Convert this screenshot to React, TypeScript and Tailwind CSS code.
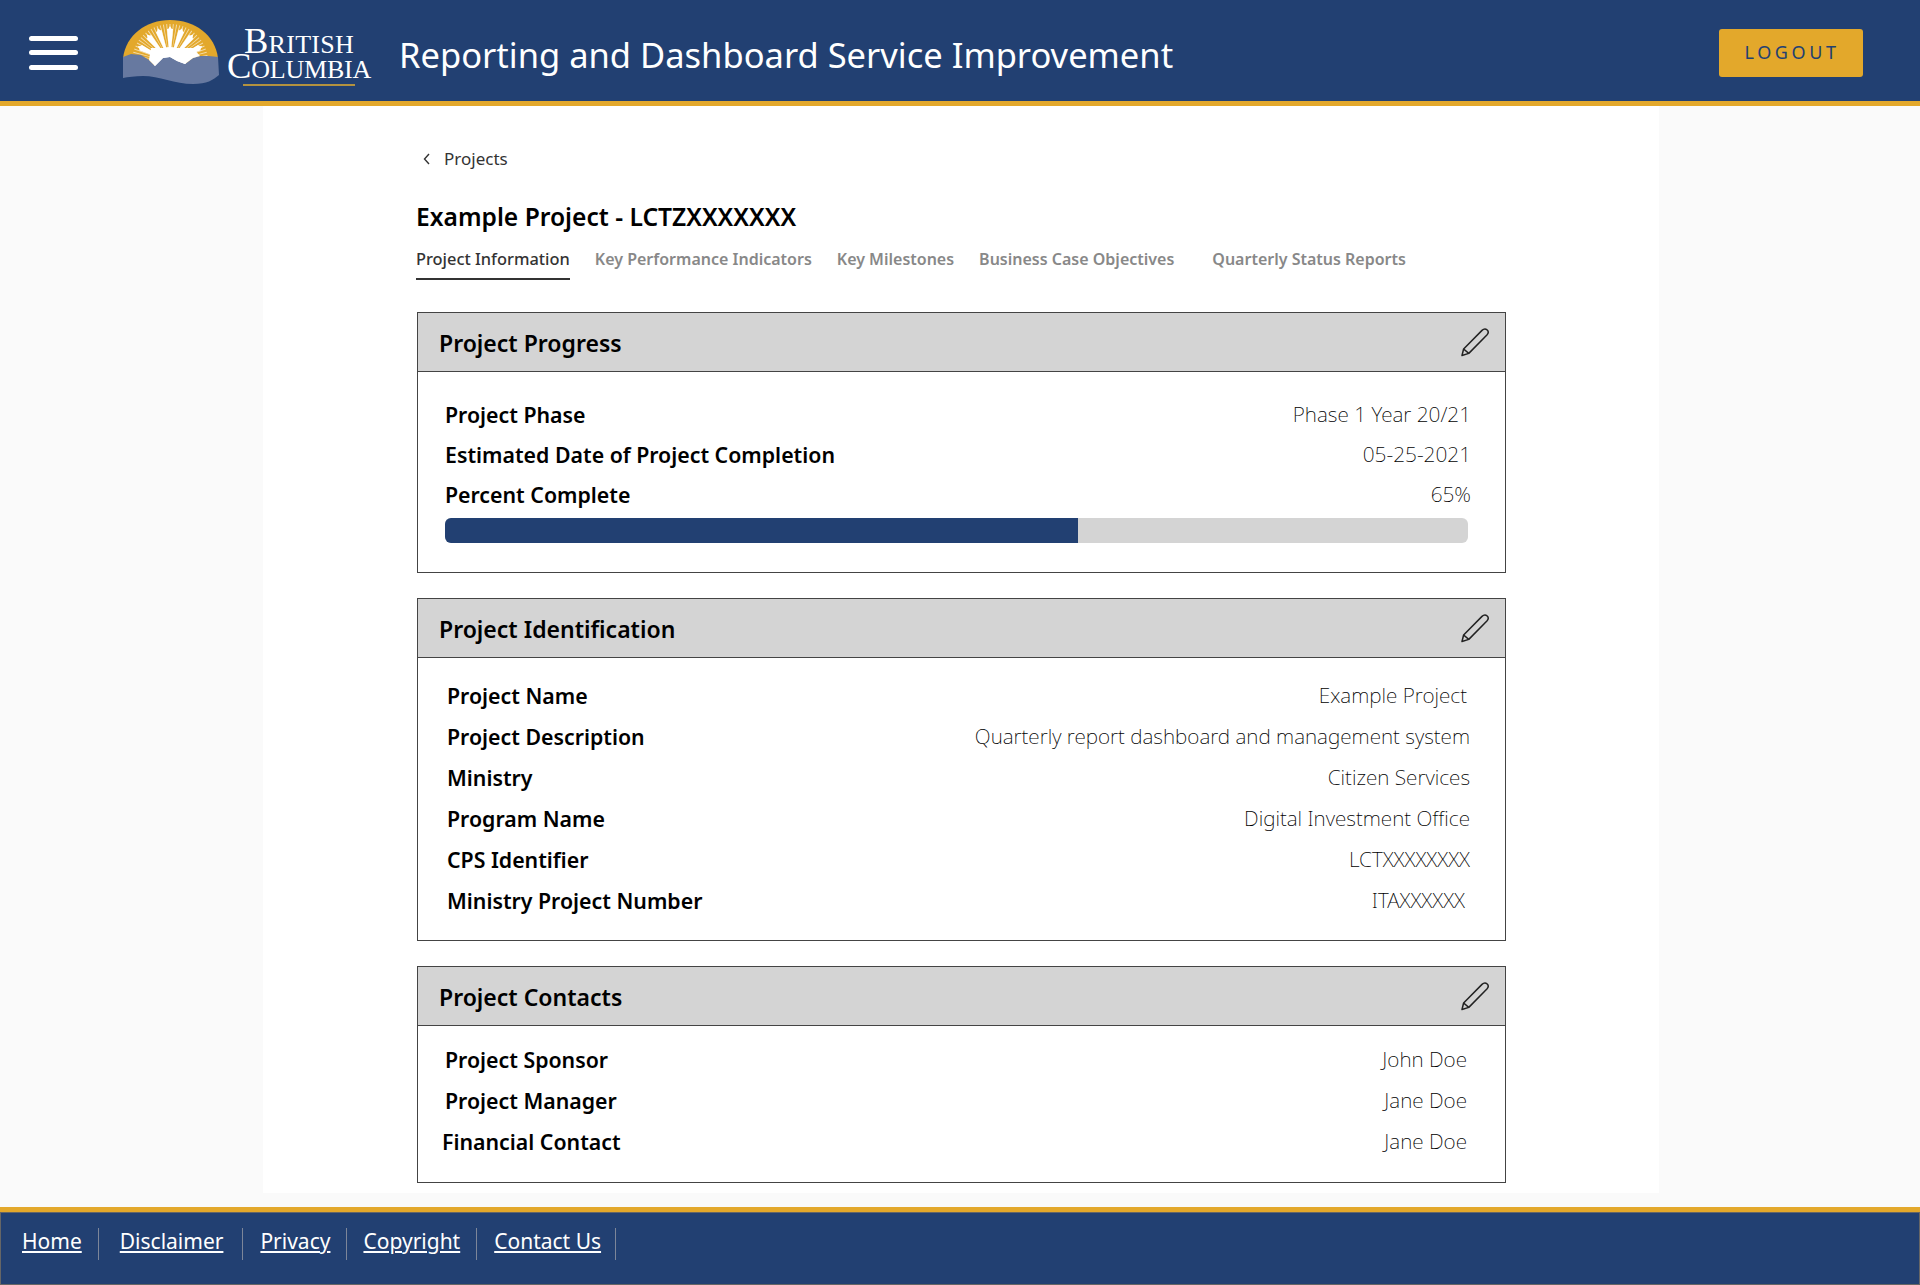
import React from 'react';

const fineRays = Array.from({ length: 33 }, (_, i) => -80 + i * 5);
const wideRays = [-64, -40, -20, 0, 20, 40, 64];

const BcLogo = () => (
  <svg width="96" height="66" viewBox="0 0 96 66" className="shrink-0">
    <path d="M0 38 C3 15 23 0 47 0 C72 0 92 15 95 38 L95 46 L0 46 Z" fill="#e3a82b" />
    {fineRays.map((a) => (
      <path key={a} d="M47 42 L46.5 4 L47.5 4 Z" fill="#fff" opacity="0.6" transform={`rotate(${a} 47 42)`} />
    ))}
    {wideRays.map((a) => (
      <path key={a} d="M47 42 L44 9 L45.2 9 L47 6 L48.8 9 L50 9 Z" fill="#fff" transform={`rotate(${a} 47 42)`} />
    ))}
    <circle cx="47" cy="43" r="16" fill="#fff" />
    <path d="M0 37 L8 34 L18 35 L26 40 L32 46 L40 38 L47 37 L54 41 L62 44 L70 38 L77 36 L86 36 L95 37 L96 55 C90 60 84 64 70 64 C52 64 36 56 20 56 C12 56 5 57 0 58 Z" fill="#6779a0" />
    <path d="M26 40 L32 46 L40 38 L47 37 L54 41 L62 44 L70 38 L77 36 L70 28 L28 28 Z" fill="#fff" />
  </svg>
);

const Hamburger = () => (
  <div className="flex flex-col gap-[9.5px] w-[49px]">
    <div className="h-[5px] bg-white rounded-full" />
    <div className="h-[5px] bg-white rounded-full" />
    <div className="h-[5px] bg-white rounded-full" />
  </div>
);

const PencilIcon = () => (
  <svg width="30" height="30" viewBox="0 0 30 30" fill="none" stroke="#222" strokeWidth="1.5" strokeLinejoin="round">
    <path d="M2 28.5 L3.6 22 L22 3.4 C23.5 1.9 25.8 1.7 27.2 3 C28.6 4.4 28.4 6.4 26.9 8 L8.8 26.4 Z" />
    <path d="M3.6 22 L8.8 26.4" />
  </svg>
);

interface CardProps {
  title: string;
  bodyClass: string;
  children: React.ReactNode;
}

const Card = ({ title, bodyClass, children }: CardProps) => (
  <section className="border border-[#444] bg-white w-[1089px]">
    <div className="h-[59px] bg-[#d4d4d4] border-b border-[#444] flex items-center justify-between pl-[21px] pr-[15px]">
      <h2 className="text-[23px] font-semibold text-black pt-[2px]">{title}</h2>
      <PencilIcon />
    </div>
    <div className={bodyClass}>{children}</div>
  </section>
);

interface RowProps {
  label: string;
  value: string;
  rowClass: string;
}

const Row = ({ label, value, rowClass }: RowProps) => (
  <div className={`flex items-center justify-between ${rowClass}`}>
    <span className="text-[21.3px] font-semibold text-black">{label}</span>
    <span className="text-[20.8px] font-extralight text-black">{value}</span>
  </div>
);

const tabs = ['Key Performance Indicators', 'Key Milestones', 'Business Case Objectives'];
const footerLinks = [
  { label: 'Home', cls: 'pl-[21px] pr-[16px]' },
  { label: 'Disclaimer', cls: 'pl-[21px] pr-[19px]' },
  { label: 'Privacy', cls: 'pl-[17px] pr-[16px]' },
  { label: 'Copyright', cls: 'pl-[16px] pr-[16px]' },
  { label: 'Contact Us', cls: 'pl-[17px] pr-[14px]' },
];

const App: React.FC = () => {
  return (
    <div className="h-[1285px] flex flex-col bg-[#fafafa] font-['Noto_Sans',sans-serif] overflow-hidden">
      <header className="h-[106px] shrink-0 bg-[#224072] border-b-[5px] border-[#e3a82b] flex items-center pt-[4px] pl-[29px] pr-[57px]">
        <Hamburger />
        <div className="ml-[45px] flex items-center">
          <BcLogo />
          <div className="ml-[8px] font-['Liberation_Serif',serif] text-white [font-variant:small-caps] leading-[24.5px] text-center mt-[10px]">
            <div className="text-[36.5px] tracking-[0.3px]">British</div>
            <div className="text-[36.5px] tracking-[-0.2px]">Columbia</div>
            <div className="h-[2px] bg-[#b3923f] mx-[16px] mt-[6px]" />
          </div>
        </div>
        <h1 className="ml-[28px] mt-[4px] text-[34.5px] text-white font-normal">Reporting and Dashboard Service Improvement</h1>
        <button className="ml-auto w-[144px] h-[48px] pl-[2px] bg-[#e3a82b] rounded-[3px] text-[#224072] text-[18px] tracking-[0.2em]">
          LOGOUT
        </button>
      </header>

      <main className="ml-[263px] w-[1396px] h-[1087px] shrink-0 bg-white pl-[153px]">
        <a className="flex items-center gap-[10px] mt-[41px] pl-[4px] h-[24px] text-[17px] text-[#333]">
          <svg width="14" height="14" viewBox="0 0 14 14" fill="none" stroke="#333" strokeWidth="1.4">
            <path d="M9 2 L4.5 7 L9 12" />
          </svg>
          Projects
        </a>
        <div className="mt-[29px] text-[24.6px] font-semibold text-black leading-[33px]">Example Project - LCTZXXXXXXX</div>
        <nav className="flex items-start mt-[7px] h-[58px] text-[16px] font-semibold text-[#888]">
          <div className="h-[40px] pt-[7px] border-b-2 border-[#333] text-[#333] text-[16.4px] font-medium">Project Information</div>
          {tabs.map((t) => (
            <div key={t} className="ml-[25px] pt-[7px]">{t}</div>
          ))}
          <div className="ml-[38px] pt-[7px]">Quarterly Status Reports</div>
        </nav>

        <div className="mt-[14px] ml-[1px] flex flex-col gap-[25px]">
          <Card title="Project Progress" bodyClass="h-[200px] pl-[27px] pr-[34px] pt-[23px]">
            <Row label="Project Phase" value="Phase 1 Year 20/21" rowClass="h-[40px]" />
            <Row label="Estimated Date of Project Completion" value="05-25-2021" rowClass="h-[40px]" />
            <Row label="Percent Complete" value="65%" rowClass="h-[40px]" />
            <div className="h-[25px] mt-[3px] mr-[3px] bg-[#d4d4d4] rounded-[6px] overflow-hidden">
              <div className="h-full w-[633px] bg-[#224072]" />
            </div>
          </Card>
          <Card title="Project Identification" bodyClass="h-[282px] pl-[29px] pr-[35px] pt-[17px]">
            <Row label="Project Name" value="Example Project" rowClass="h-[41px] pr-[3px]" />
            <Row label="Project Description" value="Quarterly report dashboard and management system" rowClass="h-[41px]" />
            <Row label="Ministry" value="Citizen Services" rowClass="h-[41px]" />
            <Row label="Program Name" value="Digital Investment Office" rowClass="h-[41px]" />
            <Row label="CPS Identifier" value="LCTXXXXXXXX" rowClass="h-[41px]" />
            <Row label="Ministry Project Number" value="ITAXXXXXX" rowClass="h-[41px] pr-[5px]" />
          </Card>
          <Card title="Project Contacts" bodyClass="h-[156px] pl-[27px] pr-[38px] pt-[13px]">
            <Row label="Project Sponsor" value="John Doe" rowClass="h-[41px]" />
            <Row label="Project Manager" value="Jane Doe" rowClass="h-[41px]" />
            <Row label="Financial Contact" value="Jane Doe" rowClass="h-[41px] -ml-[3px]" />
          </Card>
        </div>
      </main>

      <footer className="mt-[14px] h-[78px] shrink-0 border-t-[5px] border-[#e3a82b] bg-[#224072]">
        <div className="h-full border border-[#666] flex items-start pt-[15px]">
          {footerLinks.map((l) => (
            <div key={l.label} className={`h-[32px] flex items-center border-r border-[#7d8699] ${l.cls}`}>
              <a className="text-[21px] mb-[5px] text-white underline underline-offset-[2px]">{l.label}</a>
            </div>
          ))}
        </div>
      </footer>
    </div>
  );
};

export default App;
